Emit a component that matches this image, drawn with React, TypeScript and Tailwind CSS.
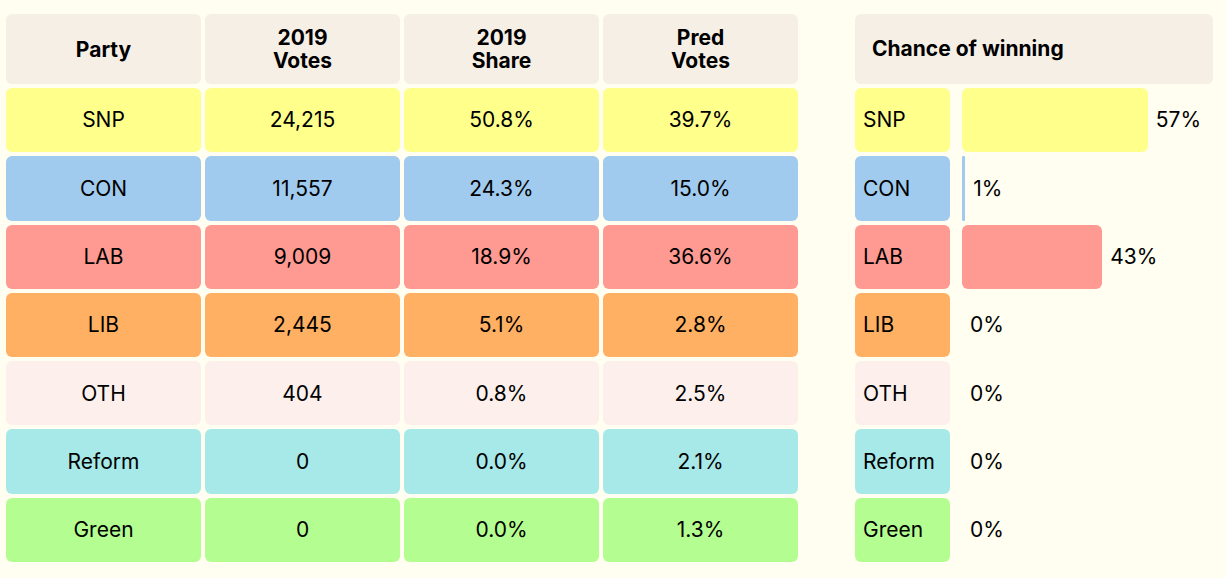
import { Fragment } from 'react';

const rows = [
  { party: 'SNP', votes: '24,215', share: '50.8%', pred: '39.7%', chance: 57, bg: 'bg-[#ffff8c]' },
  { party: 'CON', votes: '11,557', share: '24.3%', pred: '15.0%', chance: 1, bg: 'bg-[#a0cbef]' },
  { party: 'LAB', votes: '9,009', share: '18.9%', pred: '36.6%', chance: 43, bg: 'bg-[#ff9a92]' },
  { party: 'LIB', votes: '2,445', share: '5.1%', pred: '2.8%', chance: 0, bg: 'bg-[#ffb062]' },
  { party: 'OTH', votes: '404', share: '0.8%', pred: '2.5%', chance: 0, bg: 'bg-[#fdf0ec]' },
  { party: 'Reform', votes: '0', share: '0.0%', pred: '2.1%', chance: 0, bg: 'bg-[#a6e9e8]' },
  { party: 'Green', votes: '0', share: '0.0%', pred: '1.3%', chance: 0, bg: 'bg-[#b4fe91]' },
];

const cell = 'flex h-[64.3px] items-center justify-center rounded-md';
const head = 'flex h-[70px] items-center justify-center rounded-md bg-[#f6efe6] text-center font-bold leading-[23px]';

export default function App() {
  return (
    <div
      className="flex h-[578px] w-[1226px] items-start gap-[57px] bg-[#fffef0] pl-[6px] pt-[14px] text-[21px] text-black"
      style={{ fontFamily: 'Inter, "Noto Sans", sans-serif' }}
    >
      {/* Results table */}
      <div className="grid w-[792px] grid-cols-4 gap-1">
        <div className={head}>Party</div>
        <div className={head}>
          2019
          <br />
          Votes
        </div>
        <div className={head}>
          2019
          <br />
          Share
        </div>
        <div className={head}>
          Pred
          <br />
          Votes
        </div>
        {rows.map((r) => (
          <Fragment key={r.party}>
            <div className={`${cell} ${r.bg}`}>{r.party}</div>
            <div className={`${cell} ${r.bg}`}>{r.votes}</div>
            <div className={`${cell} ${r.bg}`}>{r.share}</div>
            <div className={`${cell} ${r.bg}`}>{r.pred}</div>
          </Fragment>
        ))}
      </div>

      {/* Chance of winning */}
      <div className="flex w-[358px] flex-col gap-1">
        <div className="flex h-[70px] items-center rounded-md bg-[#f6efe6] px-[17px] font-bold">
          Chance of winning
        </div>
        {rows.map((r) => (
          <div key={r.party} className="flex h-[64.3px] items-center">
            <div className={`flex h-full w-[95px] items-center rounded-md px-[8px] ${r.bg}`}>{r.party}</div>
            <div className="ml-[12px] flex h-full items-center gap-2">
              <div
                className={`h-full rounded-md ${r.bg}`}
                style={{ width: `${r.chance * 3.26}px`, borderRadius: r.chance < 3 ? '1px' : undefined }}
              />
              <span>{r.chance}%</span>
            </div>
          </div>
        ))}
      </div>
    </div>
  );
}
